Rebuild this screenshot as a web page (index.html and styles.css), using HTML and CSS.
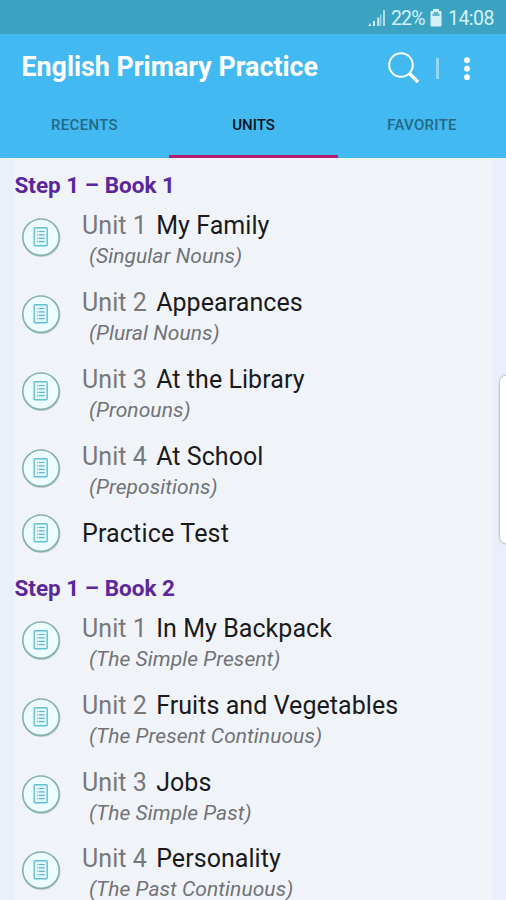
FILE: index.html
```html
<!DOCTYPE html>
<html lang="en">
<head>
<meta charset="utf-8">
<title>English Primary Practice</title>
<link rel="stylesheet" href="styles.css">
</head>
<body>
<svg class="defs" aria-hidden="true">
  <symbol id="doc" viewBox="0 0 40 40">
    <circle cx="20.5" cy="21.2" r="18.9" fill="#a9b5b8" opacity=".6"/>
    <circle cx="20" cy="20.2" r="18.2" fill="#edfcff" stroke="#86b0ae" stroke-width="1.6"/>
    <rect x="13.2" y="10.7" width="13" height="18" rx="1" fill="#e2f8fd" stroke="#66bed4" stroke-width="1.4"/>
    <path d="M16 14.500h.8M17.700 14.500h6M16 17.900h.8M17.700 17.900h6M16 21.300h.8M17.700 21.300h6M16 24.700h.8M17.700 24.700h6" stroke="#5cb7cf" stroke-width="1.2"/>
  </symbol>
</svg>
<div class="screen">
  <div class="status">
    <svg class="signal" viewBox="0 0 18 18"><path d="M0 17l3-3v3z"/><path d="M5 12h2v5H5zM9.300 8.500h2v8.500h-2z"/><path d="M12.200 5.500h1.200V17h-1.200zM15 1h2v16h-2z" opacity=".75"/></svg>
    <span class="percent">22%</span>
    <svg class="battery" viewBox="0 0 12 18"><path d="M3 0h6v2h1.500q1 0 1 1v13.500q0 1-1 1h-9q-1 0-1-1V3q0-1 1-1H3z"/><path d="M2.500 7V4.500h1.500v-1.500h4v1.500h1.500V7z" fill="#5fb5cd"/></svg>
    <span class="clock">14:08</span>
  </div>
  <header class="bar">
    <h1>English Primary Practice</h1>
    <svg class="search" viewBox="0 0 32 32"><circle cx="13" cy="13" r="11.800" fill="none" stroke="#fff" stroke-width="2"/><path d="M21.500 21.500l8.500 8.500" stroke="#fff" stroke-width="3.300"/></svg>
    <span class="divider"></span>
    <svg class="more" viewBox="0 0 6 24"><circle cx="3" cy="3.200" r="2.900"/><circle cx="3" cy="11.700" r="2.900"/><circle cx="3" cy="20.200" r="2.900"/></svg>
  </header>
  <nav class="tabs">
    <span class="tab">RECENTS</span>
    <span class="tab active">UNITS</span>
    <span class="tab">FAVORITE</span>
  </nav>
  <main class="list">
    <h2>Step 1 – Book 1</h2>
    <div class="row"><svg class="icon"><use href="#doc"/></svg><div><p class="title"><span>Unit 1</span> My Family</p><p class="sub">(Singular Nouns)</p></div></div>
    <div class="row"><svg class="icon"><use href="#doc"/></svg><div><p class="title"><span>Unit 2</span> Appearances</p><p class="sub">(Plural Nouns)</p></div></div>
    <div class="row"><svg class="icon"><use href="#doc"/></svg><div><p class="title"><span>Unit 3</span> At the Library</p><p class="sub">(Pronouns)</p></div></div>
    <div class="row"><svg class="icon"><use href="#doc"/></svg><div><p class="title"><span>Unit 4</span> At School</p><p class="sub">(Prepositions)</p></div></div>
    <div class="row single"><svg class="icon"><use href="#doc"/></svg><p class="title">Practice Test</p></div>
    <h2>Step 1 – Book 2</h2>
    <div class="row"><svg class="icon"><use href="#doc"/></svg><div><p class="title"><span>Unit 1</span> In My Backpack</p><p class="sub">(The Simple Present)</p></div></div>
    <div class="row"><svg class="icon"><use href="#doc"/></svg><div><p class="title"><span>Unit 2</span> Fruits and Vegetables</p><p class="sub">(The Present Continuous)</p></div></div>
    <div class="row"><svg class="icon"><use href="#doc"/></svg><div><p class="title"><span>Unit 3</span> Jobs</p><p class="sub">(The Simple Past)</p></div></div>
    <div class="row"><svg class="icon"><use href="#doc"/></svg><div><p class="title"><span>Unit 4</span> Personality</p><p class="sub">(The Past Continuous)</p></div></div>
  </main>
  <div class="handle"></div>
</div>
</body>
</html>
```
FILE: styles.css
```css
* { box-sizing: border-box; }
body { margin: 0; font-family: Roboto, sans-serif; }
h1, h2, p { margin: 0; }
.defs { position: absolute; width: 0; height: 0; }
.screen {
  position: relative;
  width: 506px;
  height: 900px;
  overflow: hidden;
  background: #ebeffb;
}
.status {
  height: 34px;
  padding: 2px 12px 0 0;
  display: flex;
  align-items: center;
  justify-content: flex-end;
  background: #3ba2c1;
  color: #d4f1f7;
  fill: #d4f1f7;
  font-size: 19.5px;
}
.signal { width: 18px; height: 18px; margin-right: 5px; }
.percent { width: 33px; white-space: nowrap; letter-spacing: -.8px; }
.battery { width: 12px; height: 18px; margin: 0 6px; }
.clock { white-space: nowrap; letter-spacing: -.5px; }
.bar {
  height: 66px;
  padding: 0 36px 0 21.5px;
  display: flex;
  align-items: center;
  background: #42b9f0;
}
h1 { flex: 1; color: #fff; font-size: 26.8px; font-weight: 700; line-height: 66px; white-space: nowrap; }
.search { width: 32px; height: 32px; margin: 2px 16px 0 0; }
.divider { width: 3px; height: 21px; margin: 2px 25px 0 0; background: #93d7f5; }
.more { width: 6px; height: 24px; margin-top: 3px; fill: #fff; }
.tabs { height: 57.5px; display: grid; grid-template-columns: 169px 169px 168px; background: #42b9f0; }
.tab {
  padding-top: 16px;
  text-align: center;
  font-size: 15px;
  font-weight: 500;
  letter-spacing: .3px;
  line-height: 18px;
  color: #236985;
  border-bottom: 3px solid transparent;
}
.tab.active { color: #07141c; letter-spacing: 0; border-color: #b11c6c; }
.list { margin: 0 14px; padding-top: .5px; height: 742.5px; overflow: hidden; background: #f0f4f9; }
h2 { height: 41px; padding: 14px 0 0 .5px; font-size: 22.5px; font-weight: 700; line-height: 27px; color: #5b279b; }
.row { height: 76.8px; display: flex; align-items: center; }
.row > div { padding-top: 7px; }
.row.single { height: 54.5px; }
.icon { width: 40px; height: 40px; margin: 0 21px 0 7px; flex: none; }
.title { font-size: 25px; letter-spacing: .06px; line-height: 31px; color: #1a1a1d; white-space: nowrap; }
.title span { color: #77787b; margin-right: 3px; }
.single .title { padding-top: 1px; letter-spacing: .17px; }
.sub { padding-left: 7px; font-size: 21px; letter-spacing: .06px; font-style: italic; line-height: 30px; color: #717276; white-space: nowrap; }
.handle {
  position: absolute;
  left: 499px;
  top: 375px;
  width: 14px;
  height: 169px;
  border: 1px solid #c5c8cd;
  border-radius: 8px;
  background: #fff;
  box-shadow: 0 0 3px #d0d4da;
}
```
